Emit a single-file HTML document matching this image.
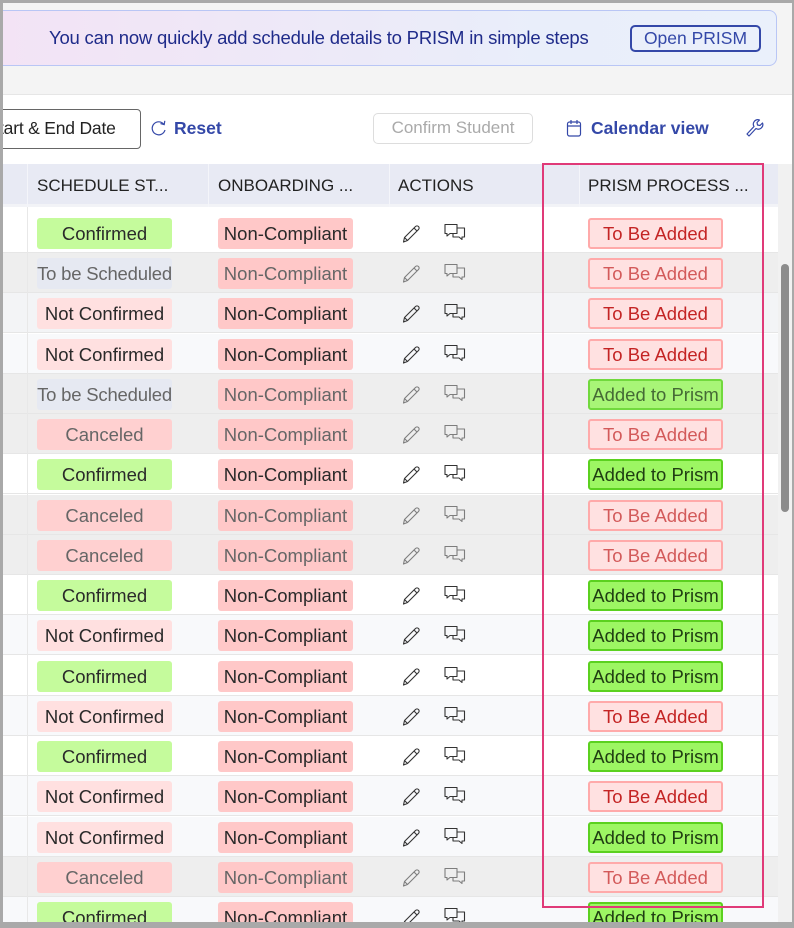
<!DOCTYPE html>
<html><head><meta charset="utf-8"><style>
*{box-sizing:border-box;margin:0;padding:0}
html,body{width:794px;height:928px;overflow:hidden}
body{background:#f4f4f4;font-family:"Liberation Sans",sans-serif;position:relative}
.frame{position:absolute;left:0;top:0;width:794px;height:928px;border:3px solid #a9a9a9;border-right-width:2px;border-bottom-width:6px;z-index:50;pointer-events:none}
.banner{position:absolute;left:0;top:10px;width:777px;height:56px;border:1.5px solid #b9c6f5;border-left:none;border-radius:0 8px 8px 0;background:linear-gradient(90deg,#f3e3f5,#e9eefa 70%,#eaf0fb)}
.banner .t{position:absolute;left:49px;top:16px;font-size:18.5px;color:#1f2b8a;letter-spacing:-.2px}
.banner .b{position:absolute;left:630px;top:14px;width:131px;height:27px;border:2px solid #3448a8;border-radius:5px;color:#3448a8;font-size:17.5px;text-align:center;line-height:23px}
.card{position:absolute;left:0;top:94px;width:792px;height:834px;background:#fff;border-top:1px solid #e6e6e6}
.datebtn{position:absolute;left:-10px;top:109px;width:151px;height:40px;border:1.5px solid #666;border-radius:4px;font-size:17.5px;color:#222;line-height:37px;padding-left:8px;letter-spacing:-.2px}
.reset{position:absolute;left:150px;top:118px;font-size:17.5px;color:#3448a8;font-weight:bold}
.confirm{position:absolute;left:373px;top:113px;width:160px;height:31px;border:1.5px solid #ddd;border-radius:5px;color:#aaa;font-size:17px;text-align:center;line-height:28px}
.cal{position:absolute;left:566px;top:118px;font-size:17.5px;color:#3448a8;font-weight:bold}
.head{position:absolute;left:0;top:164px;width:778px;height:43px;background:#e8eaf4;border-bottom:3px solid #f2f3f7}
.head div{position:absolute;top:12px;font-size:17px;color:#222}
.vl{position:absolute;top:164px;width:1px;height:43px;background:#f4f5fa}
.row{position:absolute;left:0;width:778px;height:40px;border-bottom:1px solid #e6e6e6}
.bd{position:absolute;top:5px;height:31px;width:135px;border-radius:3px;font-size:18.5px;text-align:center;line-height:32px;color:#2a2a2a;white-space:nowrap;overflow:visible}
.c1{left:37px}.c2{left:218px}.c3{left:588px}
.conf{background:#c5fb9c}.nc{background:#ffe0e0}.tbs{background:#e6e9f2;letter-spacing:-.2px}.can{background:#ffd0d0}.non{background:#ffc8c8}
.tba{background:#ffe1e1;border:2px solid #ffaaaa;color:#c42424;line-height:28px}
.add{background:#9df663;border:2px solid #5bd11f;color:#1f3d12;line-height:28px}
.dis{background:#eeeeee}.dis .bd{color:#666}.dis .tba{color:#d35a5a}.dis .add{background:#a8f577;border-color:#71d93d;color:#456a35}
.ic{position:absolute;top:9px}
.pink{position:absolute;left:542px;top:163px;width:222px;height:745px;border:2.5px solid #e03a78;z-index:20}
.sb{position:absolute;left:781px;top:264px;width:8px;height:248px;background:#8c8c8c;border-radius:4px}
.sbt{position:absolute;left:778px;top:164px;width:14px;height:764px;background:#f1f1f1}
.cd{position:absolute;left:27px;top:207px;width:1px;height:721px;background:#e8e8e8;z-index:5}
</style></head><body>
<div class="banner"><div class="t">You can now quickly add schedule details to PRISM in simple steps</div><div class="b">Open PRISM</div></div>
<div class="card"></div>
<div class="datebtn">tart &amp; End Date</div>
<div class="reset"><svg width="18" height="18" viewBox="0 0 18 18" style="vertical-align:-3px;margin-right:6px"><path d="M14 5.5A6.5 6.5 0 1 0 15 11" fill="none" stroke="#3448a8" stroke-width="1.2"/><path d="M10.5 4.5L14.2 5.6 14.8 1.8" fill="none" stroke="#3448a8" stroke-width="1.2"/></svg>Reset</div>
<div class="confirm">Confirm Student</div>
<div class="cal"><svg width="16" height="18" viewBox="0 0 16 18" style="vertical-align:-3px;margin-right:9px"><rect x="1.5" y="3" width="13" height="14" rx="2" fill="none" stroke="#3448a8" stroke-width="1.2"/><path d="M1.5 7h13M5 1v4M11 1v4" stroke="#3448a8" stroke-width="1.2"/></svg>Calendar view</div>
<svg style="position:absolute;left:745px;top:118px" width="20" height="20" viewBox="0 0 20 20"><path d="M4 18L11 10.5A4.5 4.5 0 0 0 17.5 5L15 7.5 12.5 7 12 4.5 14.5 2A4.5 4.5 0 0 0 9 8.5L2 16Z" fill="none" stroke="#3448a8" stroke-width="1.2" stroke-linejoin="round"/></svg>
<div class="sbt"></div><div class="sb"></div>
<div class="head"><div style="left:37px">SCHEDULE ST...</div><div style="left:218px">ONBOARDING ...</div><div style="left:398px">ACTIONS</div><div style="left:588px">PRISM PROCESS ...</div></div>
<div class="vl" style="left:27px"></div><div class="vl" style="left:208px"></div><div class="vl" style="left:389px"></div><div class="vl" style="left:579px"></div>
<div class="cd"></div>
<svg width="0" height="0" style="position:absolute"><defs>
<g id="pen"><path d="M3.5 20L4.5 15.5 15.5 4.5A1.8 1.8 0 0 1 18.5 7.5L7.5 18.5Z M14 6L17 9 M4.5 15.5L7.5 18.5" fill="none" stroke="#333" stroke-width="1.1" stroke-linejoin="round"/></g>
<g id="chat"><path d="M2 2.5h12v9H7l-3 2.5v-2.5H2Z" fill="none" stroke="#333" stroke-width="1.1" stroke-linejoin="round"/><path d="M14 6h7.5v9h-2.5v2.5L16 15h-6v-3.5" fill="none" stroke="#333" stroke-width="1.1" stroke-linejoin="round"/></g>
</defs></svg>

<div class="row" style="top:213px;background:#fff"><div class="bd c1 conf">Confirmed</div><div class="bd c2 non">Non-Compliant</div><svg class="ic" style="left:400px" width="24" height="24"><use href="#pen"/></svg><svg class="ic" style="left:443px" width="26" height="24"><use href="#chat"/></svg><div class="bd c3 tba">To Be Added</div></div>
<div class="row dis" style="top:253px"><div class="bd c1 tbs">To be Scheduled</div><div class="bd c2 non">Non-Compliant</div><svg class="ic" style="left:400px;opacity:.6" width="24" height="24"><use href="#pen"/></svg><svg class="ic" style="left:443px;opacity:.6" width="26" height="24"><use href="#chat"/></svg><div class="bd c3 tba">To Be Added</div></div>
<div class="row" style="top:293px;background:#f3f4f6"><div class="bd c1 nc">Not Confirmed</div><div class="bd c2 non">Non-Compliant</div><svg class="ic" style="left:400px" width="24" height="24"><use href="#pen"/></svg><svg class="ic" style="left:443px" width="26" height="24"><use href="#chat"/></svg><div class="bd c3 tba">To Be Added</div></div>
<div class="row" style="top:334px;background:#f8f9fb"><div class="bd c1 nc">Not Confirmed</div><div class="bd c2 non">Non-Compliant</div><svg class="ic" style="left:400px" width="24" height="24"><use href="#pen"/></svg><svg class="ic" style="left:443px" width="26" height="24"><use href="#chat"/></svg><div class="bd c3 tba">To Be Added</div></div>
<div class="row dis" style="top:374px"><div class="bd c1 tbs">To be Scheduled</div><div class="bd c2 non">Non-Compliant</div><svg class="ic" style="left:400px;opacity:.6" width="24" height="24"><use href="#pen"/></svg><svg class="ic" style="left:443px;opacity:.6" width="26" height="24"><use href="#chat"/></svg><div class="bd c3 add">Added to Prism</div></div>
<div class="row dis" style="top:414px"><div class="bd c1 can">Canceled</div><div class="bd c2 non">Non-Compliant</div><svg class="ic" style="left:400px;opacity:.6" width="24" height="24"><use href="#pen"/></svg><svg class="ic" style="left:443px;opacity:.6" width="26" height="24"><use href="#chat"/></svg><div class="bd c3 tba">To Be Added</div></div>
<div class="row" style="top:454px;background:#fff"><div class="bd c1 conf">Confirmed</div><div class="bd c2 non">Non-Compliant</div><svg class="ic" style="left:400px" width="24" height="24"><use href="#pen"/></svg><svg class="ic" style="left:443px" width="26" height="24"><use href="#chat"/></svg><div class="bd c3 add">Added to Prism</div></div>
<div class="row dis" style="top:495px"><div class="bd c1 can">Canceled</div><div class="bd c2 non">Non-Compliant</div><svg class="ic" style="left:400px;opacity:.6" width="24" height="24"><use href="#pen"/></svg><svg class="ic" style="left:443px;opacity:.6" width="26" height="24"><use href="#chat"/></svg><div class="bd c3 tba">To Be Added</div></div>
<div class="row dis" style="top:535px"><div class="bd c1 can">Canceled</div><div class="bd c2 non">Non-Compliant</div><svg class="ic" style="left:400px;opacity:.6" width="24" height="24"><use href="#pen"/></svg><svg class="ic" style="left:443px;opacity:.6" width="26" height="24"><use href="#chat"/></svg><div class="bd c3 tba">To Be Added</div></div>
<div class="row" style="top:575px;background:#fff"><div class="bd c1 conf">Confirmed</div><div class="bd c2 non">Non-Compliant</div><svg class="ic" style="left:400px" width="24" height="24"><use href="#pen"/></svg><svg class="ic" style="left:443px" width="26" height="24"><use href="#chat"/></svg><div class="bd c3 add">Added to Prism</div></div>
<div class="row" style="top:615px;background:#f8f9fb"><div class="bd c1 nc">Not Confirmed</div><div class="bd c2 non">Non-Compliant</div><svg class="ic" style="left:400px" width="24" height="24"><use href="#pen"/></svg><svg class="ic" style="left:443px" width="26" height="24"><use href="#chat"/></svg><div class="bd c3 add">Added to Prism</div></div>
<div class="row" style="top:656px;background:#fff"><div class="bd c1 conf">Confirmed</div><div class="bd c2 non">Non-Compliant</div><svg class="ic" style="left:400px" width="24" height="24"><use href="#pen"/></svg><svg class="ic" style="left:443px" width="26" height="24"><use href="#chat"/></svg><div class="bd c3 add">Added to Prism</div></div>
<div class="row" style="top:696px;background:#f8f9fb"><div class="bd c1 nc">Not Confirmed</div><div class="bd c2 non">Non-Compliant</div><svg class="ic" style="left:400px" width="24" height="24"><use href="#pen"/></svg><svg class="ic" style="left:443px" width="26" height="24"><use href="#chat"/></svg><div class="bd c3 tba">To Be Added</div></div>
<div class="row" style="top:736px;background:#fff"><div class="bd c1 conf">Confirmed</div><div class="bd c2 non">Non-Compliant</div><svg class="ic" style="left:400px" width="24" height="24"><use href="#pen"/></svg><svg class="ic" style="left:443px" width="26" height="24"><use href="#chat"/></svg><div class="bd c3 add">Added to Prism</div></div>
<div class="row" style="top:776px;background:#f8f9fb"><div class="bd c1 nc">Not Confirmed</div><div class="bd c2 non">Non-Compliant</div><svg class="ic" style="left:400px" width="24" height="24"><use href="#pen"/></svg><svg class="ic" style="left:443px" width="26" height="24"><use href="#chat"/></svg><div class="bd c3 tba">To Be Added</div></div>
<div class="row" style="top:817px;background:#f8f9fb"><div class="bd c1 nc">Not Confirmed</div><div class="bd c2 non">Non-Compliant</div><svg class="ic" style="left:400px" width="24" height="24"><use href="#pen"/></svg><svg class="ic" style="left:443px" width="26" height="24"><use href="#chat"/></svg><div class="bd c3 add">Added to Prism</div></div>
<div class="row dis" style="top:857px"><div class="bd c1 can">Canceled</div><div class="bd c2 non">Non-Compliant</div><svg class="ic" style="left:400px;opacity:.6" width="24" height="24"><use href="#pen"/></svg><svg class="ic" style="left:443px;opacity:.6" width="26" height="24"><use href="#chat"/></svg><div class="bd c3 tba">To Be Added</div></div>
<div class="row" style="top:897px;background:#f8f9fb"><div class="bd c1 conf">Confirmed</div><div class="bd c2 non">Non-Compliant</div><svg class="ic" style="left:400px" width="24" height="24"><use href="#pen"/></svg><svg class="ic" style="left:443px" width="26" height="24"><use href="#chat"/></svg><div class="bd c3 add">Added to Prism</div></div>

<div class="pink"></div>
<div class="frame"></div>
</body></html>
